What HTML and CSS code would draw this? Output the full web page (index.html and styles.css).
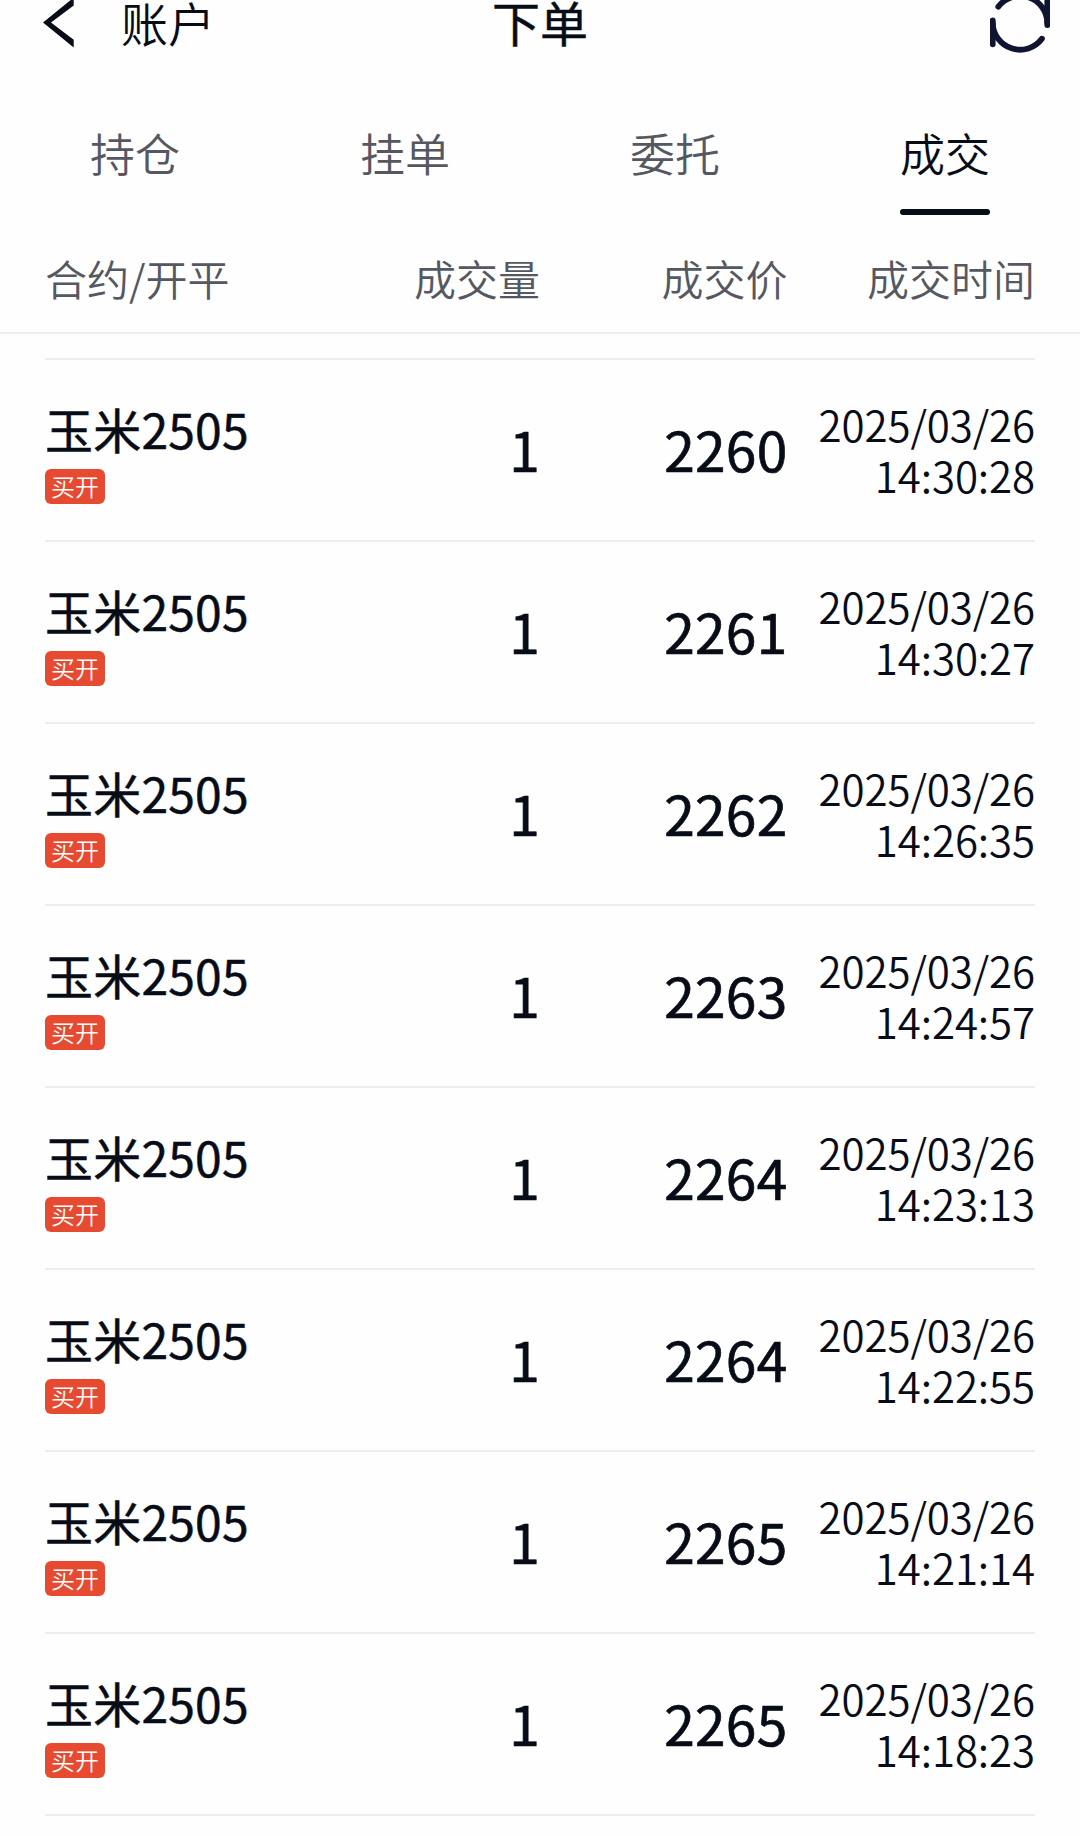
FILE: index.html
```html
<!DOCTYPE html>
<html lang="zh-CN">
<head>
  <meta charset="UTF-8">
  <meta name="viewport" content="width=device-width, initial-scale=1.0">
  <title>下单</title>
  <link rel="stylesheet" href="styles.css">
</head>
<body>
  <header class="navbar">
    <a class="back" href="#">
      <svg class="back-icon" width="32" height="48" viewBox="0 0 32 48">
        <path d="M0 22.4 L30.7 -2.4 V5.4 L8 22.4 L30.7 39.8 V47.4 Z"/>
      </svg>
      <span>账户</span>
    </a>
    <h1 class="title">下单</h1>
    <button class="refresh" type="button" aria-label="刷新">
      <svg width="60" height="56" viewBox="0 0 60 56">
        <path d="M8.3 6.7 A27.3 27.3 0 0 1 57.3 22.7"/>
        <path d="M57.3 1 V25.1"/>
        <path d="M51.9 38.7 A27.3 27.3 0 0 1 2.7 22.7"/>
        <path d="M2.7 20.3 V44.3"/>
      </svg>
    </button>
  </header>

  <nav class="tabs">
    <a class="tab" href="#">持仓</a>
    <a class="tab" href="#">挂单</a>
    <a class="tab" href="#">委托</a>
    <a class="tab active" href="#">成交</a>
  </nav>

  <div class="table-head">
    <span>合约/开平</span>
    <span>成交量</span>
    <span>成交价</span>
    <span>成交时间</span>
  </div>

  <main class="trades">
    <div class="trade">
      <div class="contract"><span class="name">玉米2505</span><span class="tag">买开</span></div>
      <div class="num">1</div>
      <div class="num">2260</div>
      <div class="time">2025/03/26<br>14:30:28</div>
    </div>
    <div class="trade">
      <div class="contract"><span class="name">玉米2505</span><span class="tag">买开</span></div>
      <div class="num">1</div>
      <div class="num">2261</div>
      <div class="time">2025/03/26<br>14:30:27</div>
    </div>
    <div class="trade">
      <div class="contract"><span class="name">玉米2505</span><span class="tag">买开</span></div>
      <div class="num">1</div>
      <div class="num">2262</div>
      <div class="time">2025/03/26<br>14:26:35</div>
    </div>
    <div class="trade">
      <div class="contract"><span class="name">玉米2505</span><span class="tag">买开</span></div>
      <div class="num">1</div>
      <div class="num">2263</div>
      <div class="time">2025/03/26<br>14:24:57</div>
    </div>
    <div class="trade">
      <div class="contract"><span class="name">玉米2505</span><span class="tag">买开</span></div>
      <div class="num">1</div>
      <div class="num">2264</div>
      <div class="time">2025/03/26<br>14:23:13</div>
    </div>
    <div class="trade">
      <div class="contract"><span class="name">玉米2505</span><span class="tag">买开</span></div>
      <div class="num">1</div>
      <div class="num">2264</div>
      <div class="time">2025/03/26<br>14:22:55</div>
    </div>
    <div class="trade">
      <div class="contract"><span class="name">玉米2505</span><span class="tag">买开</span></div>
      <div class="num">1</div>
      <div class="num">2265</div>
      <div class="time">2025/03/26<br>14:21:14</div>
    </div>
    <div class="trade">
      <div class="contract"><span class="name">玉米2505</span><span class="tag">买开</span></div>
      <div class="num">1</div>
      <div class="num">2265</div>
      <div class="time">2025/03/26<br>14:18:23</div>
    </div>
  </main>
</body>
</html>
```

FILE: styles.css
```css
* {
  box-sizing: border-box;
}
body {
  margin: 0;
  height: 1836px;
  overflow: hidden;
  background: #fefefe;
  color: #080c17;
  font-family: "Noto Sans CJK SC", sans-serif;
  font-weight: 350;
}
a {
  color: inherit;
  text-decoration: none;
}

/* Top bar */
.navbar {
  display: grid;
  grid-template-columns: 1fr auto 1fr;
  height: 96px;
  padding: 0 30px 0 43px;
}
.back {
  display: flex;
  gap: 46px;
  font-size: 47px;
  line-height: 44px;
}
.back-icon {
  fill: #080c17;
}
.title {
  margin: 0 0 0 -13px;
  font-size: 48px;
  line-height: 43px;
  font-weight: 400;
  -webkit-text-stroke: 0.5px;
}
.refresh {
  justify-self: end;
  align-self: start;
  display: flex;
  padding: 0;
  border: none;
  background: none;
  cursor: pointer;
}
.refresh svg {
  fill: none;
  stroke: #101430;
  stroke-width: 5.8;
  stroke-linecap: round;
}

/* Tabs */
.tabs {
  display: grid;
  grid-template-columns: repeat(4, 1fr);
  height: 119px;
}
.tab {
  display: flex;
  flex-direction: column;
  align-items: center;
  justify-content: space-between;
  height: 119px;
  font-size: 45px;
  line-height: 113px;
  color: #555861;
}
.tab.active {
  color: #080c17;
}
.tab.active::after {
  content: "";
  width: 90px;
  height: 6px;
  border-radius: 3px;
  background: #080c17;
}

/* Trade table */
.table-head,
.trade {
  display: grid;
  grid-template-columns: repeat(4, 247.5px);
  text-align: right;
}
.table-head {
  height: 119px;
  padding: 0 45px;
  border-bottom: 2px solid #ededef;
  font-size: 42px;
  line-height: 126px;
  color: #555861;
}
.table-head span:first-child {
  text-align: left;
}
.trades {
  margin: 24px 45px 0;
  border-top: 2px solid #ededef;
}
.trade {
  height: 182px;
  border-bottom: 2px solid #ededef;
}
.contract {
  display: flex;
  flex-direction: column;
  align-items: flex-start;
  padding-top: 38px;
}
.name {
  font-size: 48px;
  line-height: 61px;
  font-weight: 400;
  letter-spacing: 0.2px;
  -webkit-text-stroke: 0.5px;
  white-space: nowrap;
}
.tag {
  margin-top: 10px;
  width: 60px;
  height: 35px;
  border-radius: 6px;
  background: #e64a30;
  color: #fff;
  font-size: 24px;
  line-height: 34px;
  text-align: center;
}
.num {
  font-size: 55px;
  line-height: 176px;
  font-weight: 400;
  letter-spacing: 0.3px;
  -webkit-text-stroke: 0.7px;
}
.time {
  padding-top: 38px;
  font-size: 42px;
  line-height: 51px;
  letter-spacing: -0.1px;
}
```
